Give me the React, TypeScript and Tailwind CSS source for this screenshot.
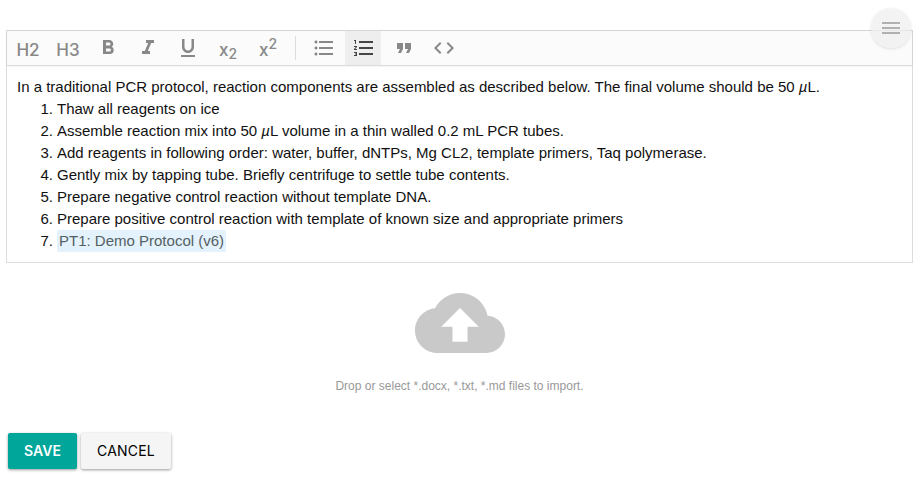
import type { ReactNode } from "react";

const icons = {
  bold: "M15.6 10.79c.97-.67 1.65-1.77 1.65-2.79 0-2.26-1.75-4-4-4H7v14h7.04c2.09 0 3.71-1.7 3.71-3.79 0-1.52-.86-2.82-2.15-3.42zM10 6.5h3c.83 0 1.5.67 1.5 1.5s-.67 1.5-1.5 1.5h-3v-3zm3.5 9H10v-3h3.5c.83 0 1.5.67 1.5 1.5s-.67 1.5-1.5 1.5z",
  italic: "M10 4v3h2.21l-3.42 8H6v3h8v-3h-2.21l3.42-8H18V4z",
  underline: "M12 17c3.31 0 6-2.69 6-6V3h-2.5v8c0 1.93-1.57 3.5-3.5 3.5S8.5 12.93 8.5 11V3H6v8c0 3.31 2.69 6 6 6zm-7 2v2h14v-2H5z",
  bullets: "M4 10.5c-.83 0-1.5.67-1.5 1.5s.67 1.5 1.5 1.5 1.5-.67 1.5-1.5-.67-1.5-1.5-1.5zm0-6c-.83 0-1.5.67-1.5 1.5S3.17 7.5 4 7.5 5.5 6.83 5.5 6 4.83 4.5 4 4.5zm0 12c-.83 0-1.5.68-1.5 1.5s.68 1.5 1.5 1.5 1.5-.68 1.5-1.5-.67-1.5-1.5-1.5zM7 19h14v-2H7v2zm0-6h14v-2H7v2zm0-8v2h14V5H7z",
  numbers: "M2 17h2v.5H3v1h1v.5H2v1h3v-4H2v1zm1-9h1V4H2v1h1v3zm-1 3h1.8L2 13.1v.9h3v-1H3.2L5 10.9V10H2v1zm5-6v2h14V5H7zm0 14h14v-2H7v2zm0-6h14v-2H7v2z",
  quote: "M6 17h3l2-4V7H5v6h3zm8 0h3l2-4V7h-6v6h3z",
  code: "M9.4 16.6L4.8 12l4.6-4.6L8 6l-6 6 6 6 1.4-1.4zm5.2 0l4.6-4.6-4.6-4.6L16 6l6 6-6 6-1.4-1.4z",
  menu: "M3 18h18v-2H3v2zm0-5h18v-2H3v2zm0-7v2h18V6H3z",
  upload: "M19.35 10.04C18.67 6.59 15.64 4 12 4 9.11 4 6.6 5.64 5.35 8.04 2.34 8.36 0 10.91 0 14c0 3.31 2.69 6 6 6h13c2.76 0 5-2.24 5-5 0-2.64-2.05-4.78-4.65-4.96zM14 13v4h-4v-4H7l5-5 5 5h-3z",
};

function Icon({ name, className = "size-6" }: { name: keyof typeof icons; className?: string }) {
  return (
    <svg viewBox="0 0 24 24" fill="currentColor" className={`shrink-0 ${className}`}>
      <path d={icons[name]} />
    </svg>
  );
}

function Tool({ children, active = false }: { children: ReactNode; active?: boolean }) {
  return (
    <button
      className={`flex h-[34px] w-9 shrink-0 items-center justify-center ${active ? "bg-[#eeeeee] text-[#444]" : "text-[#888]"}`}
    >
      {children}
    </button>
  );
}

const steps = [
  "Thaw all reagents on ice",
  "Assemble reaction mix into 50 µL volume in a thin walled 0.2 mL PCR tubes.",
  "Add reagents in following order: water, buffer, dNTPs, Mg CL2, template primers, Taq polymerase.",
  "Gently mix by tapping tube. Briefly centrifuge to settle tube contents.",
  "Prepare negative control reaction without template DNA.",
  "Prepare positive control reaction with template of known size and appropriate primers",
];

function Micro({ text }: { text: string }) {
  const parts = text.split("µ");
  return (
    <>
      {parts[0]}
      {parts.length > 1 && <i>µ</i>}
      {parts[1]}
    </>
  );
}

export default function App() {
  return (
    <div className="relative h-[479px] w-[922px] overflow-hidden bg-white pt-[30px] pl-[6px] font-['Liberation_Sans',Arial,sans-serif] text-[#111]">
      <section className="h-[233px] w-[907px] border border-[#dcdcdc]">
        <div className="flex h-[35px] items-center gap-1 border-b border-[#dcdcdc] bg-[#fbfbfb] pl-[3px] font-['Inter',sans-serif] text-[17px] font-medium shadow-[0_0_2px_rgba(0,0,0,0.1)]">
          <Tool><span className="pt-[5px]">H2</span></Tool>
          <Tool><span className="pt-[5px]">H3</span></Tool>
          <Tool><Icon name="bold" /></Tool>
          <Tool><Icon name="italic" /></Tool>
          <Tool><Icon name="underline" /></Tool>
          <Tool>
            <span className="flex items-baseline pt-[5px] leading-5">
              x<span className="translate-y-[3px] text-[14px]">2</span>
            </span>
          </Tool>
          <Tool>
            <span className="flex items-baseline pt-[5px] leading-5">
              x<span className="-translate-y-[7px] text-[14px]">2</span>
            </span>
          </Tool>
          <div className="mr-[5px] ml-[5px] h-6 w-px bg-[#dcdcdc]" />
          <Tool><Icon name="bullets" className="ml-[2px] size-6" /></Tool>
          <Tool active><Icon name="numbers" className="ml-[2px] size-6" /></Tool>
          <Tool><Icon name="quote" className="ml-[2px] size-6" /></Tool>
          <Tool><Icon name="code" className="ml-[2px] size-6" /></Tool>
        </div>
        <div className="pt-[10px] pl-[10px] text-[15px] leading-[22px] whitespace-nowrap">
          <p><Micro text="In a traditional PCR protocol, reaction components are assembled as described below. The final volume should be 50 µL." /></p>
          <ol>
            {steps.map((step, i) => (
              <li key={step} className="flex">
                <span className="w-[36px] text-right">{i + 1}.</span>
                <span className="ml-[4px]"><Micro text={step} /></span>
              </li>
            ))}
            <li className="flex">
              <span className="w-[36px] text-right">7.</span>
              <span className="ml-[4px] h-[22px] rounded-[2px] bg-[#e3f2fd] px-[2px] text-[#546063]">PT1: Demo Protocol (v6)</span>
            </li>
          </ol>
        </div>
      </section>
      <div className="flex w-[907px] flex-col items-center pt-[15px]">
        <Icon name="upload" className="size-[90px] text-[#c9c9c9]" />
        <p className="mt-[9px] text-[12px] leading-[18px] text-[#999]">Drop or select *.docx, *.txt, *.md files to import.</p>
      </div>
      <div className="mt-[38px] ml-[2px] flex gap-1 font-['Inter',sans-serif] text-[14px]">
        <button className="h-9 w-[69px] rounded-[2px] bg-[#00a699] pb-[2px] font-semibold text-white shadow-[0_1px_3px_rgba(0,0,0,0.4)]">SAVE</button>
        <button className="h-9 w-[90px] rounded-[2px] bg-[#f5f5f5] pb-[2px] tracking-[0.2px] text-black shadow-[0_1px_3px_rgba(0,0,0,0.4)]">CANCEL</button>
      </div>
      <button className="absolute top-2 left-[871px] flex size-10 items-center justify-center rounded-full bg-[#eeeeee]/70 text-[#b0b0b0] shadow-[0_1px_3px_rgba(0,0,0,0.12)]">
        <Icon name="menu" />
      </button>
    </div>
  );
}
